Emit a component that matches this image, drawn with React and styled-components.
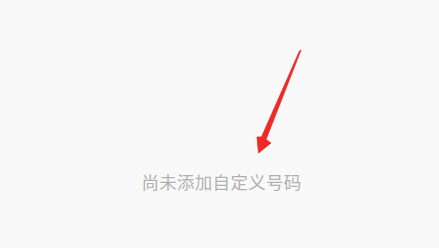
import styled, { createGlobalStyle } from "styled-components"

const GlobalStyle = createGlobalStyle`
  html, body {
    margin: 0;
    padding: 0;
    background: #f9f9f9;
  }
`

const Page = styled.div`
  position: relative;
  width: 100%;
  height: 100vh;
  box-sizing: border-box;
  padding-top: 170px;
  display: flex;
  justify-content: center;
  align-items: flex-start;
  background: #f9f9f9;
  overflow: hidden;
`

const EmptyText = styled.p`
  margin: 0 0 0 4px;
  font-family: "Noto Sans CJK SC", "Noto Sans", sans-serif;
  font-size: 17.5px;
  line-height: 24px;
  letter-spacing: 0.3px;
  color: #b1b1b3;
`

const Annotation = styled.svg`
  position: absolute;
  left: 0;
  top: 0;
  width: 439px;
  height: 248px;
  pointer-events: none;
`

function ArrowMark() {
  return (
    <Annotation viewBox="0 0 439 248">
      <polygon
        points="301,50 299.5,51 261.5,137 257,137 258.5,153 271,143 266,139.5"
        fill="#ef2a24"
        stroke="#ef2a24"
        strokeWidth="0.8"
        strokeLinejoin="round"
      />
    </Annotation>
  )
}

function App() {
  return (
    <>
      <GlobalStyle />
      <Page>
        <EmptyText>尚未添加自定义号码</EmptyText>
        <ArrowMark />
      </Page>
    </>
  )
}

export default App
